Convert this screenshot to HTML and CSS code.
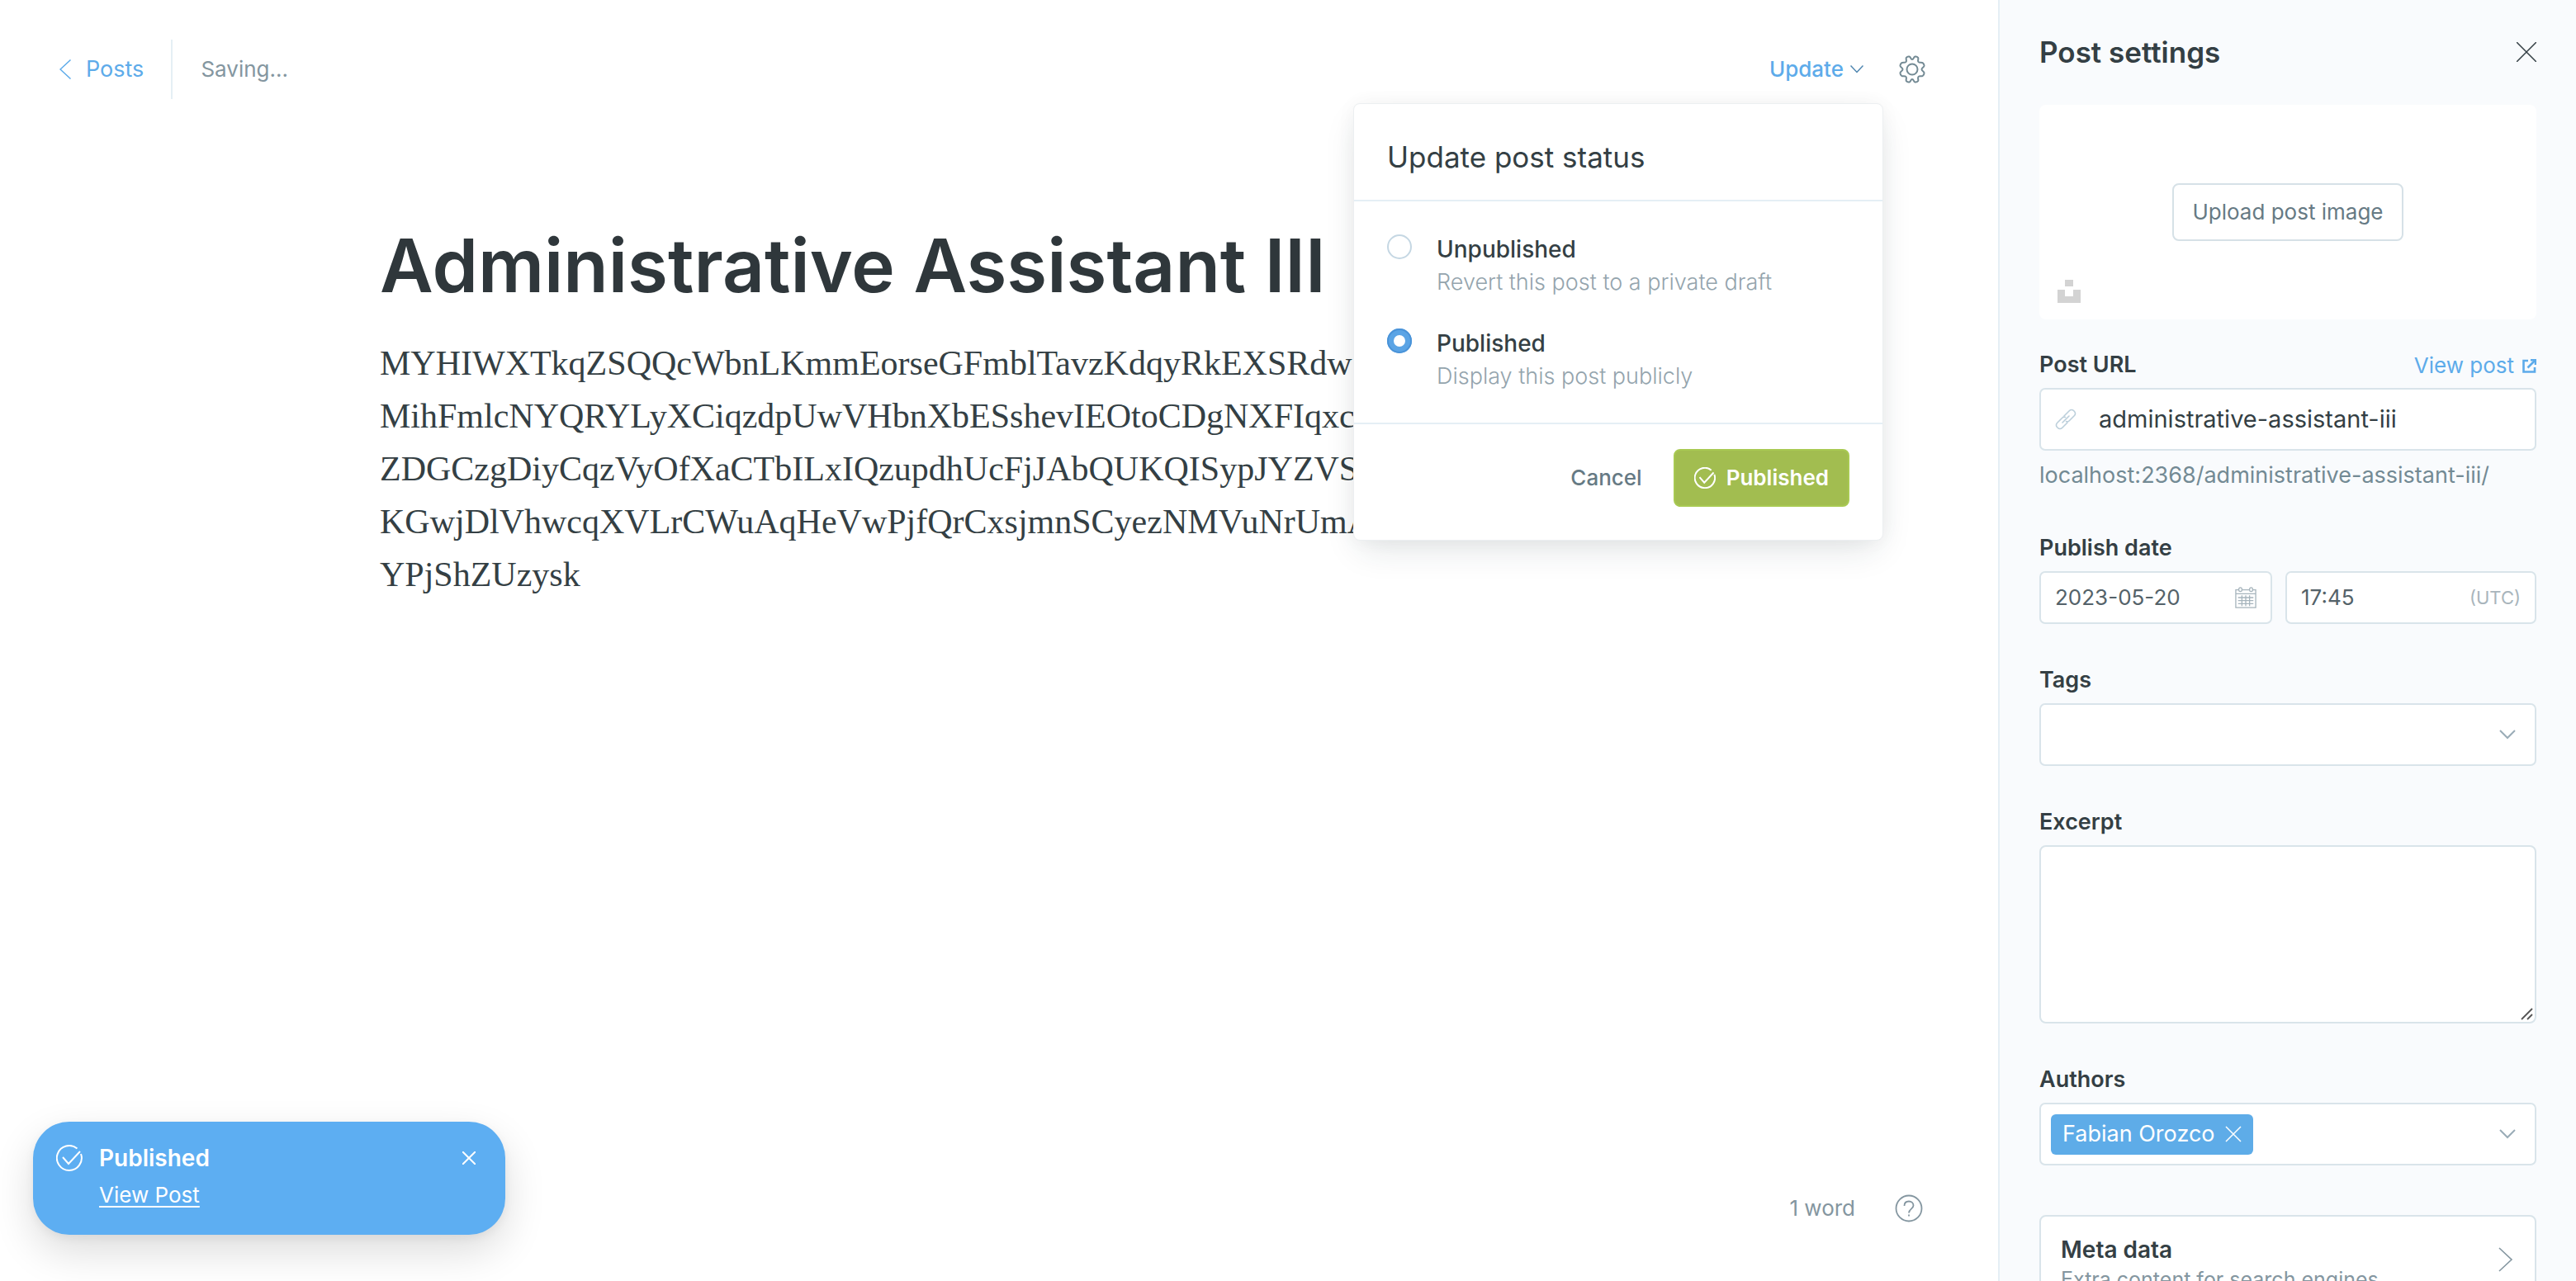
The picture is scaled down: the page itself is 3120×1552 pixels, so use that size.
FILE: index.html
```html
<!DOCTYPE html>
<html lang="en">
<head>
<meta charset="utf-8">
<title>Administrative Assistant III</title>
<meta name="viewport" content="width=device-width, initial-scale=1">
<link rel="stylesheet" href="styles.css">
</head>
<body>
<div class="app">
  <main class="editor">
    <header class="topbar">
      <a class="back" href="#">
        <svg width="14" height="24" viewBox="0 0 14 24" fill="none" stroke="currentColor" stroke-width="1.500"><path d="M13.500.500 1 12l12.500 11.500"/></svg>
        Posts
      </a>
      <span class="save-state">Saving...</span>
      <div class="actions">
        <button class="update" type="button" aria-expanded="true">Update
          <svg width="16" height="10" viewBox="0 0 16 10" fill="none" stroke="#4f86b0" stroke-width="1.500"><path d="m.5.5 7.500 8 7.500-8"/></svg>
        </button>
        <button class="icon-button gear" type="button" aria-label="Settings">
          <svg width="34" height="34" viewBox="0 0 34 34" fill="none" stroke="currentColor" stroke-width="2" stroke-linejoin="round"><circle cx="17" cy="17" r="6.500"/><path d="M13.500 1.500C15.500 2 15 5 17 5s1.500-3 3.500-3.500c1-.2 3 .5 3.600 1.300C25 4.300 23.300 6.500 24.500 8s3.800.3 5.300 1.200c1 .8 1.800 2.500 1.700 3.700-.4 1.800-3 2.100-3 4.100s2.600 2.300 3 4.100c.1 1.200-.7 2.900-1.700 3.700-1.500.9-4.100-.3-5.300 1.200s.5 3.700-.4 5.200c-.6.8-2.600 1.500-3.600 1.300C18.500 32 19 29 17 29s-1.500 3-3.500 3.500c-1 .2-3-.5-3.600-1.300-.9-1.500.8-3.700-.4-5.200s-3.800-.3-5.300-1.200c-1-.8-1.800-2.500-1.700-3.700.4-1.800 3-2.100 3-4.100s-2.600-2.300-3-4.100c-.1-1.200.7-2.900 1.700-3.700C5.700 8.300 8.300 9.500 9.500 8s-.5-3.700.4-5.200c.6-.8 2.600-1.500 3.600-1.300Z"/></svg>
        </button>
        <form class="status-menu">
          <h2 class="status-title">Update post status</h2>
          <div class="status-options">
            <label class="option">
              <input type="radio" name="status">
              <span><strong>Unpublished</strong><small>Revert this post to a private draft</small></span>
            </label>
            <label class="option">
              <input type="radio" name="status" checked>
              <span><strong>Published</strong><small>Display this post publicly</small></span>
            </label>
          </div>
          <div class="status-footer">
            <button class="cancel" type="button">Cancel</button>
            <button class="confirm" type="button">
              <svg width="26" height="26" viewBox="0 0 32 32" fill="none" stroke="currentColor" stroke-width="2.400"><path d="M25.500 4.500A15 15 0 1 0 30 11"/><path d="m8 15 7 8L29 8"/></svg>
              Published
            </button>
          </div>
        </form>
      </div>
    </header>
    <article class="post">
      <h1>Administrative Assistant III</h1>
      <p>MYHIWXTkqZSQQcWbnLKmmEorseGFmblTavzKdqyRkEXSRdw<br>MihFmlcNYQRYLyXCiqzdpUwVHbnXbESshevIEOtoCDgNXFIqxc<br>ZDGCzgDiyCqzVyOfXaCTbILxIQzupdhUcFjJAbQUKQISypJYZVS<br>KGwjDlVhwcqXVLrCWuAqHeVwPjfQrCxsjmnSCyezNMVuNrUmAxg<br>YPjShZUzysk</p>
    </article>
    <footer class="statusbar">
      <span>1 word</span>
      <a class="help" href="#" aria-label="Help">
        <svg width="34" height="34" viewBox="0 0 34 34" fill="none" stroke="currentColor" stroke-width="1.800"><circle cx="17" cy="17" r="15.500"/><path d="M11.500 14c0-3.500 2.300-5.500 5.500-5.500s5.500 2 5.500 5c0 4-5.500 4.300-5.500 9"/><path d="M17 24.500v2"/></svg>
      </a>
    </footer>
    <aside class="toast">
      <svg width="32" height="32" viewBox="0 0 32 32" fill="none" stroke="currentColor" stroke-width="2"><path d="M25.500 4.500A15 15 0 1 0 30 11"/><path d="m8 15 7 8L29 8"/></svg>
      <div class="toast-text"><strong>Published</strong><a href="#">View Post</a></div>
      <button class="icon-button" type="button" aria-label="Dismiss">
        <svg width="16" height="16" viewBox="0 0 16 16" stroke="currentColor" stroke-width="2"><path d="m0 0 16 16M16 0 0 16"/></svg>
      </button>
    </aside>
  </main>
  <aside class="settings">
    <header class="settings-head">
      <h2>Post settings</h2>
      <button class="icon-button" type="button" aria-label="Close">
        <svg width="24" height="24" viewBox="0 0 24 24" stroke="currentColor" stroke-width="1.500"><path d="m0 0 24 24M24 0 0 24"/></svg>
      </button>
    </header>
    <div class="uploader">
      <button class="upload" type="button">Upload post image</button>
      <svg class="unsplash" width="28" height="28" viewBox="0 0 28 28" fill="#d3d3d3"><path d="M9 0h10v8H9zM0 12h9v8h10v-8h9v16H0z"/></svg>
    </div>
    <div class="field url-field">
      <div class="label-row"><label for="url">Post URL</label>
        <a href="#">View post
          <svg width="17" height="17" viewBox="0 0 17 17" fill="none" stroke="currentColor" stroke-width="2.600"><path d="M7 2H1.500v13.500H15V10M6.500 10.500 15 2"/><path d="M10 1.300h6V7" /></svg>
        </a>
      </div>
      <div class="box tall">
        <svg width="26" height="26" viewBox="0 0 26 26" fill="none" stroke="#bccfdb" stroke-width="1.600" stroke-linecap="round"><path d="m9 17 8-8"/><path d="m11 9 6.500-6.500a3.500 3.500 0 0 1 5 0l1 1a3.500 3.500 0 0 1 0 5L17 15c-1 1-2.500 1-3.500.5"/><path d="m15 17-6.500 6.500a3.500 3.500 0 0 1-5 0l-1-1a3.500 3.500 0 0 1 0-5L9 11c1-1 2.500-1 3.500-.5"/></svg>
        <input id="url" class="slug" type="text" value="administrative-assistant-iii">
      </div>
      <p class="hint">localhost:2368/administrative-assistant-iii/</p>
    </div>
    <div class="field">
      <label for="date">Publish date</label>
      <div class="date-row">
        <div class="box"><input id="date" type="text" value="2023-05-20">
          <svg width="26" height="26" viewBox="0 0 28 28" fill="none" stroke="#a6b4bc" stroke-width="1.400"><path d="M5 4H1v23h26V4h-4M9 4h10M1 9h26M4 14h20M4 18h20M4 22h20M9 11v14M14 11v14M19 11v14"/><rect x="5" y="1" width="4" height="5" rx="2"/><rect x="19" y="1" width="4" height="5" rx="2"/></svg>
        </div>
        <div class="box"><input id="time" type="text" value="17:45" aria-label="Publish time"><span class="zone">(UTC)</span></div>
      </div>
    </div>
    <div class="field">
      <label for="tags">Tags</label>
      <div class="box tall"><input id="tags" type="text">
        <svg class="caret" width="20" height="12" viewBox="0 0 20 12" fill="none" stroke="currentColor" stroke-width="2"><path d="m1 1 9 9 9-9"/></svg>
      </div>
    </div>
    <div class="field">
      <label for="excerpt">Excerpt</label>
      <div class="area">
        <textarea id="excerpt"></textarea>
        <svg class="grip" width="15" height="15" viewBox="0 0 15 15" stroke="#555" stroke-width="1.800"><path d="M1 14 14 1M8 14l6-6"/></svg>
      </div>
    </div>
    <div class="field">
      <label for="authors">Authors</label>
      <div class="box tall authors">
        <span class="token">Fabian Orozco
          <button class="icon-button" type="button" aria-label="Remove Fabian Orozco"><svg width="20" height="20" viewBox="0 0 20 20" stroke="currentColor" stroke-width="1.500"><path d="m1 1 18 18M19 1 1 19"/></svg></button>
        </span>
        <input id="authors" type="text">
        <svg class="caret" width="20" height="12" viewBox="0 0 20 12" fill="none" stroke="currentColor" stroke-width="2"><path d="m1 1 9 9 9-9"/></svg>
      </div>
    </div>
    <button class="meta" type="button">
      <span><strong>Meta data</strong><small>Extra content for search engines</small></span>
      <svg width="18" height="30" viewBox="0 0 18 30" fill="none" stroke="currentColor" stroke-width="1.600"><path d="m1 1 15 14L1 29"/></svg>
    </button>
  </aside>
</div>
</body>
</html>
```
FILE: styles.css
```css
* { box-sizing: border-box; margin: 0; }

body {
  font: 400 26px/32px Inter, sans-serif;
  color: #343f44;
  background: #fff;
}

button, input, textarea { font: inherit; color: inherit; }
button { padding: 0; border: 0; background: none; cursor: pointer; }
a { color: #5dabea; text-decoration: none; }
svg { display: block; flex: none; }
strong, small { display: block; }
small { font-size: 27px; }

.app {
  display: grid;
  grid-template-columns: 1fr 700px;
  grid-template-rows: minmax(0, 1fr);
  height: 100vh;
  overflow: hidden;
}

.editor {
  position: relative;
  display: flex;
  flex-direction: column;
  min-width: 0;
}

/* Top bar */
.topbar {
  display: flex;
  align-items: center;
  height: 168px;
  padding: 0 87px 0 72px;
}
.back {
  display: flex;
  align-items: center;
  gap: 18px;
  height: 72px;
  padding-right: 33px;
  border-right: 2px solid #e5eff5;
  font-size: 27px;
}
.save-state { margin-left: 34px; color: #8496a0; }
.actions {
  position: relative;
  display: flex;
  align-items: center;
  gap: 42px;
  margin-left: auto;
}
.update {
  display: flex;
  align-items: center;
  gap: 8px;
  font-weight: 500;
  color: #5dabea;
}
.icon-button { display: flex; flex: none; }
.gear { color: #738a94; }

/* Status menu */
.status-menu {
  position: absolute;
  top: 58px;
  right: 52px;
  z-index: 2;
  width: 642px;
  border: 1px solid #eceff1;
  border-radius: 8px;
  background: #fff;
  box-shadow: 0 16px 40px -8px rgba(30, 50, 60, .14), 0 0 24px rgba(30, 50, 60, .04);
}
.status-title {
  padding: 46px 40px 34px;
  border-bottom: 2px solid #e5eff5;
  font-size: 35px;
  line-height: 36px;
  font-weight: 400;
}
.status-options {
  display: grid;
  gap: 34px;
  padding: 38px 40px 36px;
  border-bottom: 2px solid #e5eff5;
}
.option { display: flex; gap: 30px; }
.option strong { font-size: 28px; line-height: 40px; font-weight: 500; }
.option small { line-height: 40px; font-weight: 300; color: #94a4ad; }
.option input {
  appearance: none;
  flex: none;
  width: 30px;
  height: 30px;
  margin: 2px 0 0;
  border: 2px solid #c5d7e3;
  border-radius: 50%;
  background: #fff;
}
.option input:checked { border: 8px solid #5ba4e5; outline: 2px solid #4a93d8; outline-offset: -2px; }
.status-footer {
  display: flex;
  justify-content: flex-end;
  align-items: center;
  gap: 38px;
  padding: 30px 40px 40px;
}
.cancel { font-weight: 500; color: #667a84; }
.confirm {
  display: flex;
  align-items: center;
  gap: 13px;
  height: 70px;
  padding: 0 23px;
  border: 2px solid #a8c952;
  border-radius: 8px;
  background: #a2bd50;
  font-weight: 600;
  color: #fff;
}

/* Post */
.post {
  flex: 1;
  width: 100%;
  max-width: 1580px;
  padding: 96px 40px 0;
  margin: 0 auto;
}
.post h1 {
  font-size: 89px;
  line-height: 116px;
  font-weight: 600;
  color: #2f373b;
  white-space: nowrap;
}
.post p {
  margin-top: 28px;
  font: 400 42px/64px "Liberation Serif", serif;
  white-space: nowrap;
}

.statusbar {
  display: flex;
  justify-content: flex-end;
  align-items: center;
  gap: 48px;
  height: 176px;
  padding-right: 91px;
  color: #8496a0;
}
.help { color: #8496a0; }

/* Toast */
.toast {
  position: absolute;
  left: 40px;
  bottom: 56px;
  display: flex;
  align-items: flex-start;
  gap: 20px;
  width: 572px;
  padding: 28px 28px 32px;
  border-radius: 44px;
  background: #5daef2;
  box-shadow: 0 20px 50px rgba(0, 0, 0, .14), 0 4px 12px rgba(0, 0, 0, .05);
  color: #fff;
}
.toast-text { flex: 1; }
.toast-text strong { font-size: 28px; font-weight: 600; }
.toast-text a {
  display: inline-block;
  margin-top: 13px;
  color: #fff;
  text-decoration: underline;
  text-decoration-thickness: 2px;
  text-underline-offset: 4px;
}
.toast .icon-button { margin: 8px 8px 0 0; }

/* Settings panel */
.settings {
  min-width: 0;
  padding: 39px 48px 0;
  border-left: 2px solid #e5eff5;
  background: #f9fbfd;
  overflow: hidden;
}
.settings-head {
  display: flex;
  justify-content: space-between;
  align-items: center;
  height: 48px;
  margin-bottom: 40px;
}
.settings-head h2 { font-size: 35px; font-weight: 600; }
.uploader {
  position: relative;
  display: grid;
  place-items: center;
  height: 260px;
  margin-bottom: 39px;
  border-radius: 8px;
  background: #fff;
}
.upload {
  height: 70px;
  padding: 0 22px;
  border: 2px solid #d6e1e7;
  border-radius: 8px;
  color: #667a84;
}
.unsplash { position: absolute; left: 22px; bottom: 20px; }

.field { margin-bottom: 52px; }
.url-field { margin-bottom: 56px; }
.field label {
  display: block;
  height: 40px;
  margin-bottom: 4px;
  font-size: 27px;
  line-height: 32px;
  font-weight: 600;
}
.label-row { display: flex; justify-content: space-between; }
.label-row a { display: flex; align-items: center; gap: 10px; height: 34px; }
.box {
  display: flex;
  align-items: center;
  gap: 20px;
  height: 64px;
  padding: 0 17px;
  border: 2px solid #d9e4ea;
  border-radius: 7px;
  background: #fff;
}
.box input {
  flex: 1;
  width: 100%;
  min-width: 0;
  padding: 0;
  border: 0;
  background: none;
  color: #546269;
}
.tall { height: 76px; }
.box .slug { font-size: 29px; color: #343f44; margin-left: 7px; }
.hint { margin-top: 14px; font-size: 27px; color: #738a94; }
.date-row { display: grid; grid-template-columns: 282px 1fr; gap: 16px; }
.zone { font-size: 22px; color: #a9b5bc; }
.caret { margin-right: 6px; color: #9aacb7; }
.area { position: relative; }
.area textarea {
  display: block;
  width: 100%;
  height: 216px;
  padding: 16px;
  border: 2px solid #d9e4ea;
  border-radius: 8px;
  background: #fff;
  resize: none;
}
.grip { position: absolute; right: 4px; bottom: 4px; }
.authors { padding-left: 12px; }
.token {
  display: flex;
  align-items: center;
  gap: 12px;
  height: 49px;
  padding: 0 14px;
  border-radius: 6px;
  background: #5eace8;
  font-size: 27px;
  color: #fff;
}
.meta {
  display: flex;
  justify-content: space-between;
  align-items: flex-start;
  width: 100%;
  padding: 22px 26px 24px 24px;
  margin-top: 60px;
  border: 2px solid #d9e4ea;
  border-radius: 8px;
  background: #fff;
  text-align: left;
}
.meta strong { font-size: 28px; line-height: 36px; font-weight: 600; }
.meta small { line-height: 36px; font-size: 25px; color: #8496a0; }
.meta svg { margin-top: 15px; color: #8496a0; }
```
